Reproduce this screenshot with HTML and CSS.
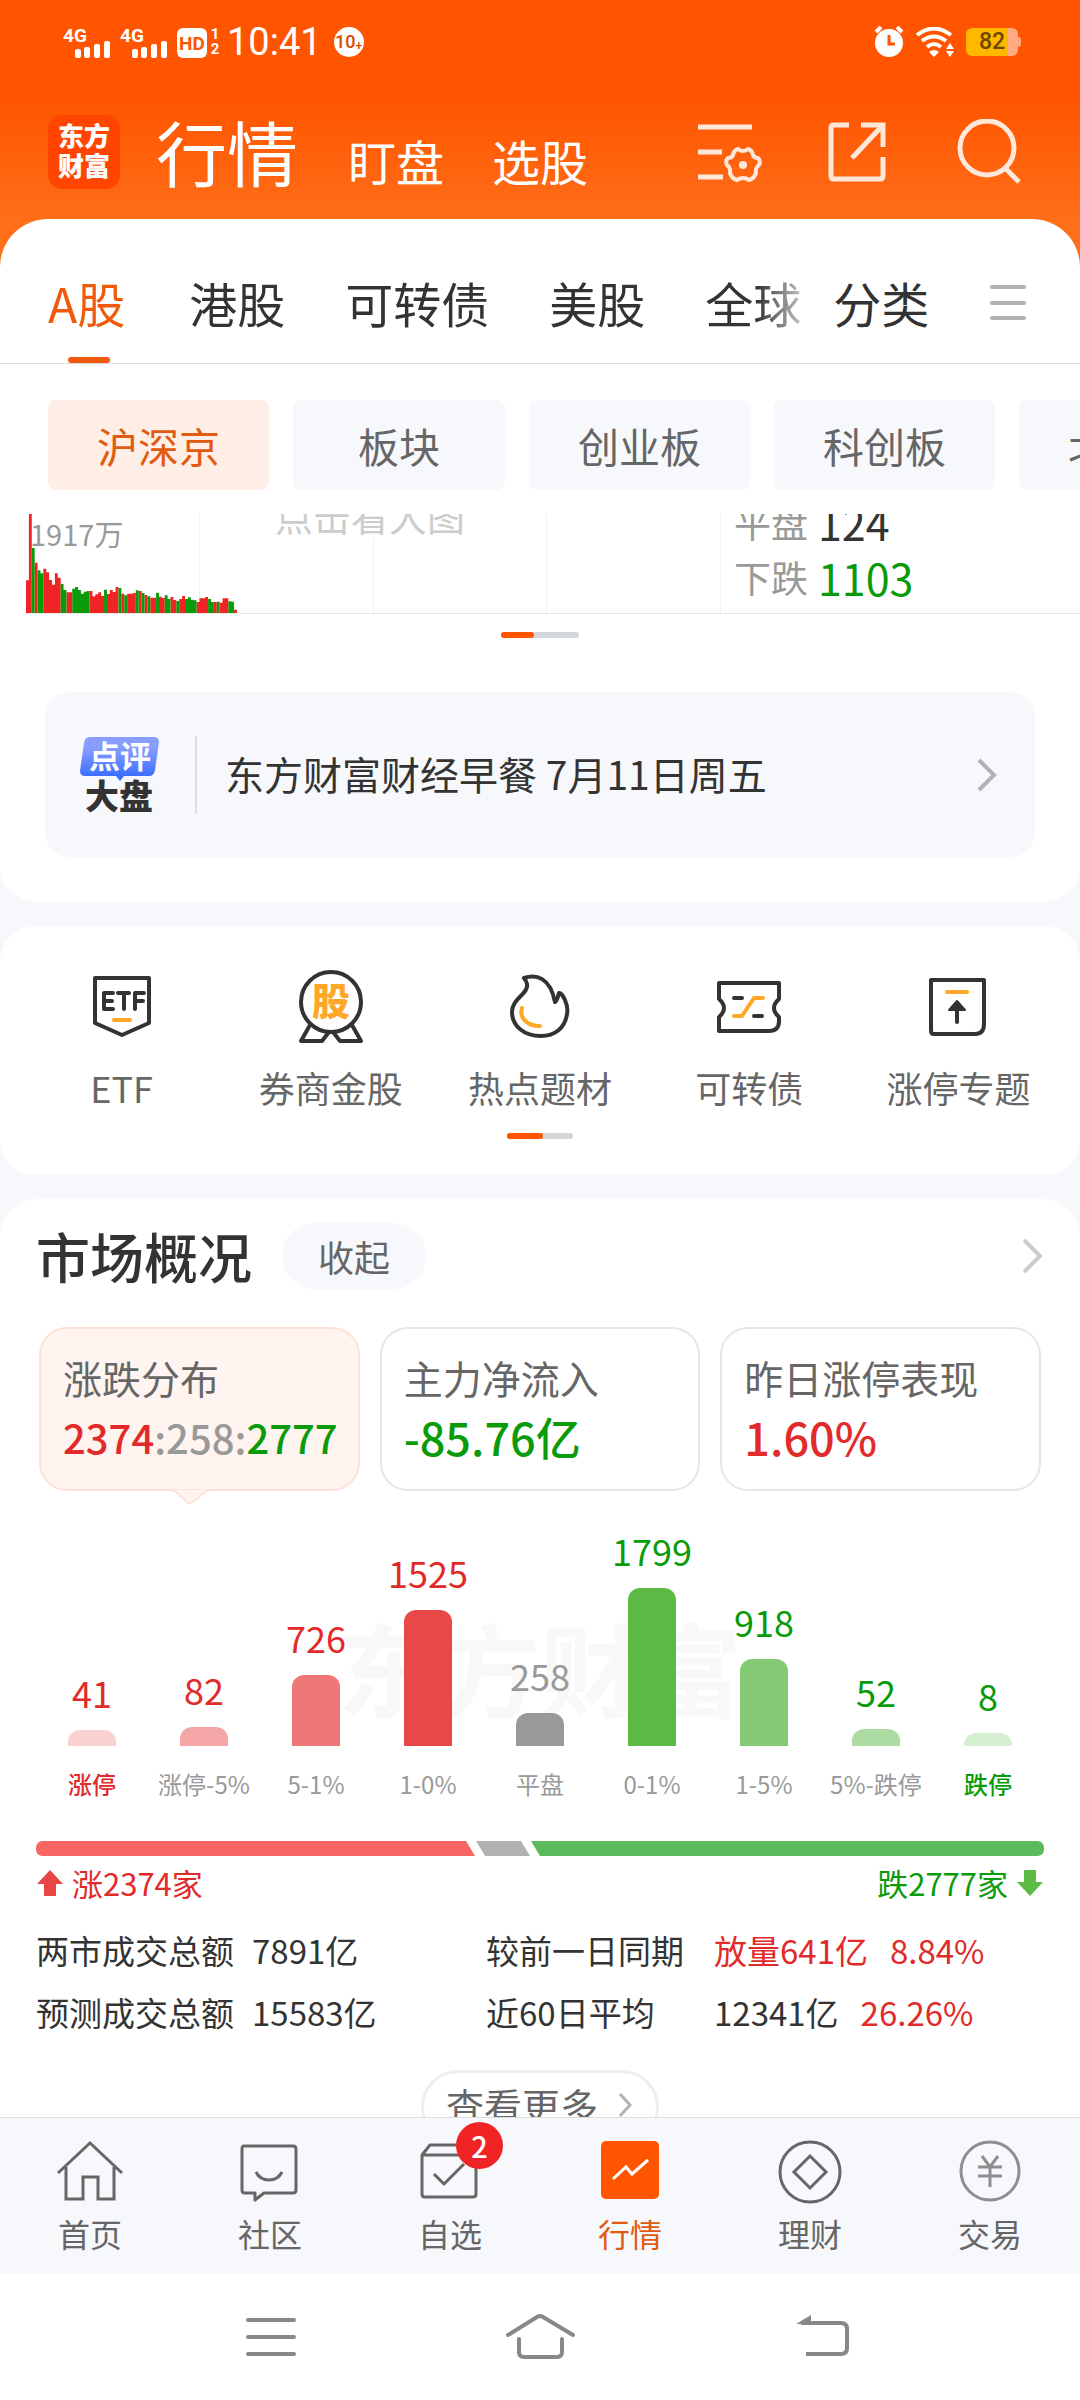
FILE: index.html
```html
<!DOCTYPE html>
<html lang="zh-CN">
<head>
<meta charset="utf-8">
<meta name="viewport" content="width=device-width, initial-scale=1">
<title>行情</title>
<link rel="stylesheet" href="styles.css">
</head>
<body>
<header class="top">
  <div class="status">
    <svg class="signal" width="145" height="34" viewBox="0 0 145 34" fill="#fff" aria-hidden="true">
      <text class="sig-text" x="0" y="17">4G</text>
      <text class="sig-text" x="57" y="17">4G</text>
      <rect x="12" y="24" width="6" height="9" rx="2"/><rect x="21" y="22" width="6" height="11" rx="2"/><rect x="31" y="19" width="6" height="14" rx="2"/><rect x="41" y="16" width="6" height="17" rx="2"/>
      <rect x="69" y="24" width="6" height="9" rx="2"/><rect x="78" y="22" width="6" height="11" rx="2"/><rect x="88" y="19" width="6" height="14" rx="2"/><rect x="98" y="16" width="6" height="17" rx="2"/>
      <rect x="114" y="3" width="30" height="30" rx="6"/>
      <text class="hd-text" x="129" y="25">HD</text>
    </svg>
    <span class="sims"><span>1</span><span>2</span></span>
    <span class="clock">10:41</span>
    <span class="count">10<i>+</i></span>
    <span class="status-right">
      <svg width="30" height="32" viewBox="0 0 30 32" aria-hidden="true"><circle cx="15" cy="17" r="14" fill="#fff"/><path d="M2 6l5-5M28 6l-5-5" stroke="#fff" stroke-width="4"/><path d="M15 9v9h6" fill="none" stroke="#f50" stroke-width="3"/></svg>
      <svg width="38" height="30" viewBox="0 0 38 30" fill="none" aria-hidden="true"><g stroke="#fff" stroke-width="4"><path d="M1 8Q18-5 35 8"/><path d="M6 14Q18 5 30 14"/><path d="M11 20Q18 14 25 20"/></g><path d="M13 25Q18 21 23 25L18 30z" fill="#fff"/><path d="M34 16l4 6h-8zM34 30l4-6h-8z" fill="#fff"/></svg>
      <span class="battery">82</span>
    </span>
  </div>
  <div class="title-row">
    <a class="logo" href="#">东方<br>财富</a>
    <nav class="main-nav">
      <a class="current" href="#">行情</a>
      <a href="#">盯盘</a>
      <a href="#">选股</a>
    </nav>
    <div class="tools">
      <button type="button" aria-label="设置">
        <svg width="64" height="64" viewBox="0 0 64 64" fill="none" stroke="#ffe8da" stroke-width="5"><path d="M0 7h54M0 32h24M0 57h25"/><path stroke-width="4" stroke-linejoin="round" d="M40 29Q45 33 50 29Q54 30 55 35Q56 38 60 38Q63 41 61 45Q57 48 58 53Q56 59 51 60Q45 56 39 60Q34 59 32 53Q33 48 29 45Q27 41 30 38Q34 38 35 35Q36 30 40 29z"/><circle cx="45" cy="45" r="4" fill="#ffe8da" stroke="none"/></svg>
      </button>
      <button type="button" class="share" aria-label="分享">
        <svg width="58" height="60" viewBox="0 0 58 60" fill="none" stroke="#ffe8da" stroke-width="5"><path d="M21 3H6q-3 0-3 3V54q0 3 3 3H52q3 0 3-3V35M33 3H55V25M55 3L24 36"/></svg>
      </button>
      <button type="button" aria-label="搜索">
        <svg width="64" height="66" viewBox="0 0 64 66" fill="none" stroke="#ffe8da" stroke-width="5"><circle cx="30" cy="29" r="27"/><path d="M48 49L62 63"/></svg>
      </button>
    </div>
  </div>
</header>

<main class="content">
  <section class="sheet">
    <div class="tabs">
      <nav class="tab-list">
        <a class="current" href="#">A股</a><a href="#">港股</a><a href="#">可转债</a><a href="#">美股</a><a href="#">全球</a>
      </nav>
      <a class="category" href="#">分类</a>
      <button type="button" class="more" aria-label="更多"><svg width="36" height="38" viewBox="0 0 36 38" stroke="#b2b2b2" stroke-width="4" stroke-linecap="round"><path d="M2 2h32M2 18h32M2 33h32"/></svg></button>
    </div>
    <div class="chips">
      <button type="button" class="current">沪深京</button>
      <button type="button">板块</button>
      <button type="button">创业板</button>
      <button type="button">科创板</button>
      <button type="button">北证</button>
    </div>
    <div class="quote">
      <div class="volume">
        <span></span><span></span><span></span><span></span>
        <svg class="volume-bars" viewBox="0 0 73 297" preserveAspectRatio="none" aria-hidden="true">
          <path fill="#f02424" d="M0 297V199h1V297zM1 297V0h1V297zM3 297V146h1V297zM6 297V164h1V175h1V198h1V212h1V178h1V191h1V297zM14 297V235h2V297zM22 297V231h1V247h1V241h1V235h1V246h1V297zM28 297V240h1V228h1V234h1V219h1V297zM33 297V239h1V297zM35 297V239h2V237h1V297zM39 297V231h1V297zM41 297V243h1V297zM43 297V251h2V297zM46 297V248h1V252h1V297zM50 297V249h1V258h1V297zM53 297V255h1V246h1V297zM59 297V264h1V253h2V249h1V297zM65 297V264h1V297zM67 297V266h1V253h2V297zM72 297V287h1V297z"/>
          <path fill="#0a9b0a" d="M2 297V102h1V297zM4 297V169h1V178h1V297zM12 297V210h1V228h1V297zM16 297V224h1V219h1V228h1V239h1V233h1V231h1V297zM27 297V227h1V297zM32 297V222h1V297zM34 297V244h1V297zM38 297V229h1V297zM40 297V237h1V297zM42 297V247h1V297zM45 297V236h1V297zM48 297V244h1V255h1V297zM52 297V261h1V297zM55 297V255h1V250h1V257h1V259h1V297zM63 297V255h1V264h1V297zM66 297V263h1V297zM70 297V262h1V263h1V297z"/>
        </svg>
        <b class="volume-max">1917万</b>
        <b class="volume-hint">点击看大图</b>
      </div>
      <dl class="breadth">
        <div><dt>平盘</dt><dd>124</dd></div>
        <div><dt>下跌</dt><dd class="down">1103</dd></div>
      </dl>
    </div>
    <div class="pager pager-wide"><span></span></div>
    <a class="comment" href="#">
      <svg width="80" height="76" viewBox="0 0 80 76" aria-hidden="true">
        <defs><linearGradient id="bubble" x1="0" y1="0" x2="0" y2="1"><stop offset=".25" stop-color="#879eff"/><stop offset="1" stop-color="#2f67ff"/></linearGradient></defs>
        <path fill="url(#bubble)" d="M10 0H74q5 0 5 5L75 33q-1 6-6 6H44l-4 5-4-5H5q-5 0-5-5L4 6q1-6 6-6z"/>
        <text class="bubble-text" x="40" y="31">点评</text>
        <text class="bubble-sub" x="39" y="72">大盘</text>
      </svg>
      <span class="comment-text">东方财富财经早餐 7月11日周五</span>
      <svg width="20" height="34" viewBox="0 0 20 34" fill="none" stroke="#b2b2b2" stroke-width="4"><path d="M2 2L17 17L2 32"/></svg>
    </a>
  </section>

  <section class="panel shortcuts">
    <div class="shortcut-list">
      <a href="#"><svg width="76" height="76" viewBox="0 0 76 76" fill="none" stroke="#333" stroke-width="4" stroke-linejoin="round" stroke-linecap="round"><path d="M11 10H65V55L38 67L11 55z"/><path stroke="#ffa726" d="M30 52h16"/><path d="M29 25H20V41H29M20 33h8M34 25H45M40 25V41M60 25H51V41M51 33h8"/></svg>ETF</a>
      <a href="#"><svg width="76" height="76" viewBox="0 0 76 76" fill="none" stroke="#333" stroke-width="4" stroke-linejoin="round"><circle cx="38" cy="34" r="30"/><path d="M17 57L8 73H29L36 64M59 57L68 73H47L40 64"/><text class="medal-text" x="38" y="47">股</text></svg>券商金股</a>
      <a href="#"><svg width="76" height="76" viewBox="0 0 76 76" fill="none" stroke="#333" stroke-width="4" stroke-linejoin="round" stroke-linecap="round"><path d="M22 10C34 6 48 9 53 34C56 32 56 27 57 25C60 24 67 37 65 46C63 60 53 68 39 68C22 68 10 58 10 44C10 30 27 26 25 16Q24 12 22 10z"/><path stroke="#ffa726" d="M20 40C17 50 25 58 38 58"/></svg>热点题材</a>
      <a href="#"><svg width="76" height="76" viewBox="0 0 76 76" fill="none" stroke="#333" stroke-width="4" stroke-linejoin="round" stroke-linecap="round"><path d="M8 15H68V31Q58 40 68 49V53Q68 63 58 63H8V49Q18 40 8 31z"/><path d="M23 30h8M43 48h8"/><path stroke="#ffa726" d="M23 48h8L43 30h9"/></svg>可转债</a>
      <a href="#"><svg width="76" height="76" viewBox="0 0 76 76" fill="none" stroke="#333" stroke-width="4" stroke-linejoin="round" stroke-linecap="round"><path d="M11 12H64V56Q64 66 55 66H14Q11 66 11 63z"/><path stroke="#ffa726" d="M27 24h20"/><path d="M37 36V54"/><path fill="#333" stroke-width="2" d="M37 33L45 42H29z"/></svg>涨停专题</a>
    </div>
    <div class="pager"><span></span></div>
  </section>

  <section class="panel market">
    <div class="market-head">
      <h2>市场概况</h2>
      <button type="button" class="fold">收起</button>
      <a class="go" href="#" aria-label="更多"><svg width="22" height="36" viewBox="0 0 22 36" fill="none" stroke="#ccc" stroke-width="4"><path d="M2 2L18 18L2 34"/></svg></a>
    </div>
    <div class="stats">
      <button type="button" class="stat current"><span>涨跌分布</span><strong><i class="up">2374</i><i class="flat">:258:</i><i class="down">2777</i></strong>
        <svg class="pointer" width="42" height="16" viewBox="0 0 42 16"><path fill="#fff4ef" stroke="#fce3d8" stroke-width="2" d="M0 1Q4 1 6 3L17 13Q20 15 23 13L35 3Q37 1 41 1"/></svg></button>
      <button type="button" class="stat"><span>主力净流入</span><strong class="down">-85.76亿</strong></button>
      <button type="button" class="stat"><span>昨日涨停表现</span><strong class="up">1.60%</strong></button>
    </div>

    <div class="dist">
      <div class="watermark">东方财富</div>
      <div class="col up"><b>41</b><span class="bar u1" style="height:16px"></span><em class="strong">涨停</em></div>
      <div class="col up"><b>82</b><span class="bar u2" style="height:19px"></span><em>涨停-5%</em></div>
      <div class="col up"><b>726</b><span class="bar u3" style="height:71px"></span><em>5-1%</em></div>
      <div class="col up"><b>1525</b><span class="bar u4" style="height:136px"></span><em>1-0%</em></div>
      <div class="col flat"><b>258</b><span class="bar" style="height:33px"></span><em>平盘</em></div>
      <div class="col down"><b>1799</b><span class="bar d4" style="height:158px"></span><em>0-1%</em></div>
      <div class="col down"><b>918</b><span class="bar d3" style="height:87px"></span><em>1-5%</em></div>
      <div class="col down"><b>52</b><span class="bar d2" style="height:17px"></span><em>5%-跌停</em></div>
      <div class="col down"><b>8</b><span class="bar d1" style="height:13px"></span><em class="strong">跌停</em></div>
    </div>

    <svg class="ratio" viewBox="0 0 1008 15" preserveAspectRatio="none" aria-hidden="true"><path fill="#f76565" d="M7 0H430L439 15H7Q0 15 0 8Q0 0 7 0z"/><path fill="#b2b2b2" d="M440 0H485L494 15H449z"/><path fill="#5cba5c" d="M495 0H1001Q1008 0 1008 8Q1008 15 1001 15H504z"/></svg>
    <div class="ratio-text">
      <span class="up"><svg width="28" height="28" viewBox="0 0 28 28"><path fill="#e84545" d="M14 1L27 15H20V27H8V15H1z"/></svg>涨2374家</span>
      <span class="down">跌2777家<svg width="28" height="28" viewBox="0 0 28 28"><path fill="#5cba45" d="M14 27L27 13H20V1H8V13H1z"/></svg></span>
    </div>

    <table class="totals">
      <tr><th scope="row">两市成交总额</th><td class="amount">7891亿</td><th scope="row">较前一日同期</th><td><span class="up">放量641亿</span><span class="up">8.84%</span></td></tr>
      <tr><th scope="row">预测成交总额</th><td class="amount">15583亿</td><th scope="row">近60日平均</th><td><span>12341亿</span><span class="up">26.26%</span></td></tr>
    </table>
    <button type="button" class="see-more">查看更多<svg width="16" height="26" viewBox="0 0 16 26" fill="none" stroke="#b2b2b2" stroke-width="3"><path d="M2 2L12 13L2 24"/></svg></button>
  </section>
</main>

<nav class="tabbar">
  <a href="#"><svg width="68" height="68" viewBox="0 0 68 68" fill="none" stroke="#666" stroke-width="3"><path d="M2 36L34 6L66 36M10 30V62H27V40H42V62H58V30"/></svg>首页</a>
  <a href="#"><svg width="68" height="68" viewBox="0 0 68 68" fill="none" stroke="#666" stroke-width="3" stroke-linejoin="round"><path d="M8 9H57Q60 9 60 12V53Q60 56 57 56H28L19 63V56H9Q6 56 6 53V12Q6 9 8 9z"/><path d="M20 35Q24 43 33 43Q42 43 46 35"/></svg>社区</a>
  <a href="#"><svg width="68" height="68" viewBox="0 0 68 68" fill="none" stroke="#666" stroke-width="3" stroke-linejoin="round"><path d="M7 18H60V57Q60 60 57 60H9Q6 60 6 57V18L14 8H53L60 18M18 37L28 47L48 27"/></svg>自选<span class="badge">2</span></a>
  <a class="current" href="#"><svg width="68" height="68" viewBox="0 0 68 68" fill="none"><rect x="5" y="4" width="58" height="58" rx="5" fill="#f50"/><path stroke="#fff" stroke-width="3" d="M17 42L30 30L36 37L52 23"/></svg>行情</a>
  <a href="#"><svg width="68" height="68" viewBox="0 0 68 68" fill="none" stroke="#666" stroke-width="3"><circle cx="34" cy="35" r="30"/><path d="M34 19L50 35L34 51L18 35z"/></svg>理财</a>
  <a href="#"><svg width="68" height="68" viewBox="0 0 68 68" fill="none" stroke="#8e8e8e" stroke-width="3"><circle cx="34" cy="34" r="29"/><path d="M26 19L34 30L42 19M34 30V50M22 30H46M22 39H46"/></svg>交易</a>
</nav>
<nav class="sysnav">
  <button type="button" aria-label="菜单"><svg width="74" height="48" viewBox="0 0 74 48" stroke="#888" stroke-width="4" stroke-linecap="round"><path d="M17 7h46M17 24h46M17 41h46"/></svg></button>
  <button type="button" aria-label="主页"><svg width="74" height="48" viewBox="0 0 74 48" fill="none" stroke="#888" stroke-width="4" stroke-linecap="round" stroke-linejoin="round"><path d="M5 22L34 4Q37 2 40 4L70 22M16 26V39Q16 44 21 44H54Q59 44 59 39V26"/></svg></button>
  <button type="button" aria-label="返回"><svg width="74" height="48" viewBox="0 0 74 48" fill="none" stroke="#888" stroke-width="4"><path d="M26 10H66Q72 10 72 16V35Q72 41 66 41H31"/><path fill="#888" stroke="none" d="M21 11L36 2V11z"/></svg></button>
</nav>
</body>
</html>
```
FILE: styles.css
```css
* { box-sizing: border-box; }

body {
  margin: 0;
  height: 100vh;
  display: flex;
  flex-direction: column;
  background: #f6f8fb;
  color: #333;
  font-family: "Noto Sans CJK SC", sans-serif;
}

a { color: inherit; text-decoration: none; }
button { margin: 0; padding: 0; border: 0; background: none; color: inherit; font: inherit; }
i, em { font-style: normal; }
b { font-weight: 400; }
svg { display: block; flex: none; }

.up { color: #e12a2a; }
.down { color: #0a9b0a; }
.flat { color: #999; }

/* header */
.top {
  flex: none;
  padding-bottom: 48px;
  background: linear-gradient(#f50 100px, #ff6e19 219px);
  color: #fff;
}
.status { display: flex; align-items: center; height: 84px; padding: 0 62px 0 63px; }
.sig-text { font: 700 19px Roboto, sans-serif; }
.hd-text { font: 700 19px Roboto, sans-serif; fill: #f50; text-anchor: middle; }
.sims { display: flex; flex-direction: column; width: 10px; margin-left: 2px; font: 700 15px/15px Roboto, sans-serif; text-align: center; }
.clock { margin-left: 7px; font: 400 38px/44px Roboto, sans-serif; }
.count {
  display: flex; align-items: center; justify-content: center;
  width: 30px; height: 30px; margin-left: 12px;
  border-radius: 50%; background: #fff; color: #d84a00;
  font: 500 18px/30px Roboto, sans-serif;
}
.count i { font-size: 12px; line-height: 12px; padding-top: 8px; }
.status-right { display: flex; align-items: center; gap: 12px; margin-left: auto; }
.battery {
  position: relative; width: 52px; height: 28px; border-radius: 6px;
  background: linear-gradient(90deg, #ffb700 42px, #ffaa80 42px);
  color: #6b4a00; text-align: center;
  font: 500 23px/28px Roboto, sans-serif;
}
.battery::after { content: ""; position: absolute; left: 100%; top: 9px; width: 3px; height: 10px; border-radius: 0 3px 3px 0; background: #ffaa80; }
.title-row { display: flex; align-items: center; height: 135px; padding: 0 59px 0 48px; }
.logo {
  width: 72px; height: 74px; padding-top: 5px; border-radius: 14px;
  background: #ff4500; text-align: center;
  font-weight: 900; font-size: 26px; line-height: 30px;
}
.main-nav { display: flex; align-items: baseline; gap: 48px; margin-left: 36px; padding-top: 6px; font-size: 48px; line-height: 90px; }
.main-nav .current { font-size: 71px; margin-right: 2px; }
.tools { display: flex; align-items: center; gap: 66px; margin-left: auto; }
.share { margin-right: 5px; }

/* scrolling content */
.content { flex: 1; min-height: 0; margin-top: -48px; overflow: hidden; border-radius: 48px 48px 0 0; }
.sheet { padding-bottom: 45px; border-radius: 0 0 36px 36px; background: #fff; }
.tabs {
  display: flex; align-items: stretch; height: 145px; padding: 26px 54px 0 48px;
  border-bottom: 1px solid #ddd;
  font-size: 48px; line-height: 114px;
}
.tab-list {
  display: flex; gap: 60px; overflow: hidden; white-space: nowrap;
  mask-image: linear-gradient(90deg, #000 calc(100% - 44px), rgba(0, 0, 0, .3));
}
.tab-list .current { position: relative; margin-right: 4px; color: #f05a0a; }
.tab-list .current::after {
  content: ""; position: absolute; left: 20px; bottom: 0;
  width: 42px; height: 6px; border-radius: 3px; background: #f05a0a;
}
.category { margin-left: 32px; white-space: nowrap; }
.more { margin-left: auto; }
.chips { display: flex; gap: 24px; padding: 36px 0 24px 48px; overflow: hidden; }
.chips button {
  flex: none; height: 90px; padding: 0 49px;
  border-radius: 8px; background: #f7f8fb; color: #666;
  font-size: 41px; line-height: 88px;
}
.chips button:nth-child(2) { padding: 0 65px; }
.chips .current { background: #feeee6; color: #e05a10; }

/* the lower edge of the index chart */
.quote { display: grid; grid-template: 99px / 695fr 359fr; height: 100px; margin-left: 26px; overflow: hidden; border-bottom: 1px solid #e8e8e8; }
.volume { position: relative; display: grid; grid-template-columns: repeat(4, 1fr); }
.volume span { border-right: 1px dotted #e4e4e4; }
.volume-bars { position: absolute; left: 0; bottom: 0; width: 211px; height: 99px; }
.volume-max { position: absolute; left: 4px; top: 1px; color: #999; font-size: 29px; line-height: 36px; }
.volume-hint { position: absolute; left: 247px; bottom: 75px; padding: 0 2px; background: #fff; color: #ccc; font-size: 38px; line-height: 46px; }
.breadth { align-self: end; margin: 0; padding: 0 0 8px 13px; line-height: 55px; }
.breadth div { display: flex; gap: 10px; height: 55px; }
.breadth dt { color: #999; font-size: 37px; }
.breadth dd { margin: 0; font-size: 43px; }

.pager { width: 66px; height: 6px; margin: 0 auto; border-radius: 3px; background: #d3d7db; }
.pager span { display: block; width: 54%; height: 6px; border-radius: 3px; background: #f50; }
.pager-wide { width: 78px; margin-top: 18px; }
.pager-wide span { width: 42%; }

.comment {
  display: flex; align-items: center; height: 165px; margin: 54px 45px 0; padding: 0 38px 0 35px;
  border-radius: 24px; background: #f7f8fb;
}
.bubble-text { font: 700 31px "Noto Sans CJK SC", sans-serif; fill: #fff; text-anchor: middle; }
.bubble-sub { font: 900 34px "Noto Sans CJK SC", sans-serif; fill: #333; text-anchor: middle; }
.comment-text { flex: 1; height: 78px; margin-left: 35px; padding-left: 28px; border-left: 2px solid #dcdee2; font-size: 39px; line-height: 74px; }

/* shortcut icons */
.panel { margin-top: 24px; border-radius: 36px; background: #fff; }
.shortcuts { padding: 42px 17px 36px; }
.shortcut-list { display: grid; grid-template-columns: repeat(5, 1fr); }
.shortcut-list a { display: flex; flex-direction: column; align-items: center; gap: 18px; color: #666; font-size: 36px; line-height: 50px; white-space: nowrap; }
.medal-text { font: 900 38px "Noto Sans CJK SC", sans-serif; fill: #ffa726; stroke: none; text-anchor: middle; }
.shortcuts .pager { margin-top: 21px; }

/* market overview */
.market { padding-top: 24px; }
.market-head { display: flex; align-items: center; padding: 0 36px; }
.market-head h2 { margin: 0; font-size: 54px; font-weight: 500; line-height: 66px; }
.fold { height: 66px; margin-left: 30px; padding: 0 36px; border-radius: 33px; background: #f6f8fb; color: #666; font-size: 36px; line-height: 66px; }
.go { margin-left: auto; }
.stats { display: grid; grid-template-columns: repeat(3, 1fr); gap: 20px; margin-top: 38px; padding: 0 39px; }
.stat {
  position: relative; display: flex; flex-direction: column; align-items: flex-start;
  height: 164px; padding: 20px 0 0 22px;
  border: 2px solid #e6e6e6; border-radius: 28px; white-space: nowrap;
}
.stat span { color: #666; font-size: 39px; line-height: 56px; }
.stat strong { font-size: 45px; font-weight: 500; line-height: 64px; }
.stat.current { border-color: #fce3d8; background: #fff4ef; }
.stat.current strong { font-size: 40px; }
.pointer { position: absolute; left: 50%; top: 100%; margin-left: -29px; }

.dist { position: relative; display: grid; grid-template-columns: repeat(9, 1fr); align-items: end; margin-top: 39px; padding: 0 36px; }
.watermark { position: absolute; inset: 0; color: #f8f8f8; font-size: 101px; font-weight: 700; line-height: 272px; text-align: center; }
.col { position: relative; display: flex; flex-direction: column; align-items: center; white-space: nowrap; }
.col b { margin-bottom: 18px; font-size: 36px; line-height: 40px; }
.col em { margin-top: 22px; color: #999; font-size: 24px; line-height: 32px; }
.col .strong { color: inherit; font-weight: 500; }
.bar { width: 48px; border-radius: 12px 12px 0 0; background: #999; }
.u1 { background: #f9d1d1; }
.u2 { background: #f4a5a5; }
.u3 { background: #ee7777; }
.u4 { background: #e84848; }
.d4 { background: #5cb944; }
.d3 { background: #84ca74; }
.d2 { background: #addca2; }
.d1 { background: #d6eed1; }

.ratio { width: calc(100% - 72px); height: 15px; margin: 41px 36px 0; }
.ratio-text { display: flex; justify-content: space-between; margin-top: 9px; padding: 0 36px; font-size: 31px; line-height: 36px; }
.ratio-text span { display: flex; align-items: center; gap: 8px; }

.totals { width: 100%; margin-top: 18px; padding: 0 0 0 36px; border-spacing: 0; table-layout: fixed; font-size: 33px; line-height: 62px; white-space: nowrap; }
.totals th, .totals td { padding: 0; font-weight: 400; text-align: left; }
.totals th:first-child { width: 216px; }
.totals .amount { width: 234px; }
.totals th:nth-child(3) { width: 228px; }
.totals span { margin-right: 22px; }
.see-more {
  display: flex; align-items: center; justify-content: center; gap: 20px;
  height: 74px; margin: 27px auto 0; padding: 0 22px 4px;
  border: 3px solid #eee; border-radius: 37px; color: #666;
  font-size: 38px; line-height: 64px;
}

/* bottom bars */
.tabbar { flex: none; display: grid; grid-template-columns: repeat(6, 1fr); height: 157px; border-top: 1px solid #ddd; background: #f7f8fb; }
.tabbar a { position: relative; display: flex; flex-direction: column; align-items: center; gap: 5px; padding-top: 19px; color: #666; font-size: 32px; line-height: 46px; }
.tabbar .current { color: #e05a10; }
.badge {
  position: absolute; left: 50%; top: 4px; width: 47px; height: 47px; margin-left: 6px;
  border-radius: 50%; background: #f02424; color: #fff;
  font-size: 29px; font-weight: 500; line-height: 47px; text-align: center;
}
.sysnav { flex: none; display: flex; justify-content: space-around; height: 126px; padding: 39px 132px 0; background: #fff; }
.sysnav button { height: 48px; }
```
